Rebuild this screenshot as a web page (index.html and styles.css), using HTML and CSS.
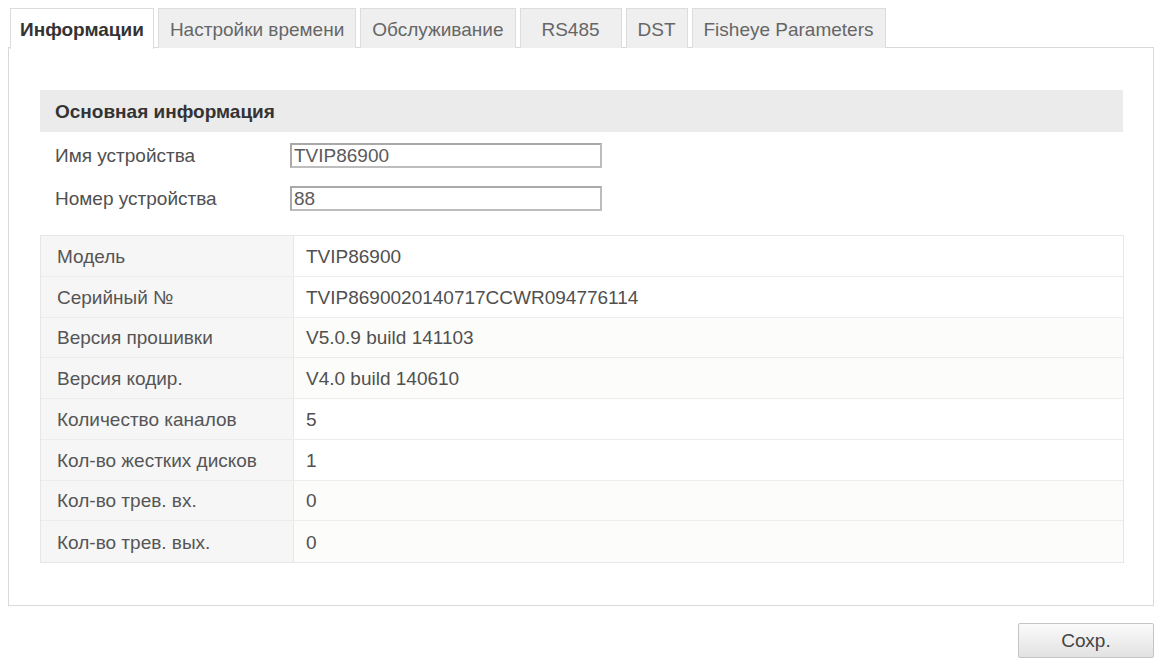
FILE: index.html
```html
<!DOCTYPE html>
<html lang="ru">
<head>
<meta charset="utf-8">
<title>Информации</title>
<link rel="stylesheet" href="styles.css">
</head>
<body>
<div class="page">
  <ul class="tabs">
    <li class="tab active">Информации</li>
    <li class="tab">Настройки времени</li>
    <li class="tab">Обслуживание</li>
    <li class="tab tab-wide">RS485</li>
    <li class="tab">DST</li>
    <li class="tab">Fisheye Parameters</li>
  </ul>
  <div class="panel">
    <div class="section-title">Основная информация</div>
    <div class="form">
      <div class="form-row">
        <span class="form-label">Имя устройства</span>
        <input class="field" type="text" value="TVIP86900">
      </div>
      <div class="form-row">
        <span class="form-label">Номер устройства</span>
        <input class="field" type="text" value="88">
      </div>
    </div>
    <div class="info-table">
      <div class="info-row"><div class="info-key">Модель</div><div class="info-val">TVIP86900</div></div>
      <div class="info-row"><div class="info-key">Серийный №</div><div class="info-val">TVIP8690020140717CCWR094776114</div></div>
      <div class="info-row tint"><div class="info-key">Версия прошивки</div><div class="info-val">V5.0.9 build 141103</div></div>
      <div class="info-row tint"><div class="info-key">Версия кодир.</div><div class="info-val">V4.0 build 140610</div></div>
      <div class="info-row"><div class="info-key">Количество каналов</div><div class="info-val">5</div></div>
      <div class="info-row"><div class="info-key">Кол-во жестких дисков</div><div class="info-val">1</div></div>
      <div class="info-row tint"><div class="info-key">Кол-во трев. вх.</div><div class="info-val">0</div></div>
      <div class="info-row tint"><div class="info-key">Кол-во трев. вых.</div><div class="info-val">0</div></div>
    </div>
  </div>
  <div class="actions">
    <button class="btn" type="button">Сохр.</button>
  </div>
</div>
</body>
</html>
```
FILE: styles.css
```css
* { box-sizing: border-box; }
html, body { margin: 0; padding: 0; background: #fff; }
body {
  font-family: "Liberation Sans", Arial, sans-serif;
  font-size: 19px;
  color: #505050;
}
.page { padding: 8px 3px 0 8px; width: 1157px; }
.tabs {
  list-style: none;
  margin: 0 0 0 2px;
  padding: 0;
  display: flex;
  gap: 4px;
  height: 40px;
  position: relative;
  z-index: 1;
}
.tab {
  height: 40px;
  padding: 2px 11px 0;
  display: flex;
  align-items: center;
  justify-content: center;
  background: #efefef;
  border: 1px solid #dcdcdc;
  border-bottom: none;
  color: #666;
  white-space: nowrap;
}
.tab-wide { min-width: 102px; }
.tab.active {
  background: #fff;
  color: #333;
  font-weight: bold;
  padding: 1px 9px 0;
  border-color: #dcdcdc;
  height: 41px;
}
.panel {
  margin-top: -1px;
  width: 1146px;
  height: 559px;
  border: 1px solid #d9d9d9;
  padding: 42px 30px 0 31px;
}
.section-title {
  height: 42px;
  background: #ebebeb;
  font-weight: bold;
  color: #333;
  display: flex;
  align-items: center;
  padding: 2px 0 0 15px;
}
.form { padding: 11px 0 0 15px; display: flex; flex-direction: column; gap: 18px; }
.form-row { display: flex; align-items: center; height: 25px; }
.form-label { width: 235px; color: #505050; }
.field {
  width: 312px;
  height: 25px;
  border: 2px solid #a9a9a9;
  border-right-color: #bdbdbd;
  border-bottom-color: #bdbdbd;
  padding: 0 2px;
  font-family: inherit;
  font-size: 19px;
  color: #5a5a5a;
  background: #fff;
  outline: none;
}
.info-table {
  margin-top: 24px;
  border: 1px solid #e6e6e6;
  width: 1084px;
}
.info-row {
  display: flex;
  height: 40.75px;
  border-bottom: 1px solid #ececec;
}
.info-row:last-child { border-bottom: none; }
.info-key {
  width: 253px;
  background: #f6f6f6;
  border-right: 1px solid #e8e8e8;
  display: flex;
  align-items: center;
  padding: 2px 0 0 16px;
  color: #555;
}
.info-val {
  flex: 1;
  display: flex;
  align-items: center;
  padding: 2px 0 0 12px;
  color: #505050;
}
.info-row.tint .info-val { background: #fcfcfa; }
.actions { display: flex; justify-content: flex-end; padding-top: 17px; width: 1146px; }
.btn {
  width: 136px;
  height: 35px;
  border: 1px solid #c4c4c4;
  border-radius: 2px;
  background: linear-gradient(#fbfbfb, #e2e2e2);
  font-family: inherit;
  font-size: 19px;
  color: #444;
}
```
